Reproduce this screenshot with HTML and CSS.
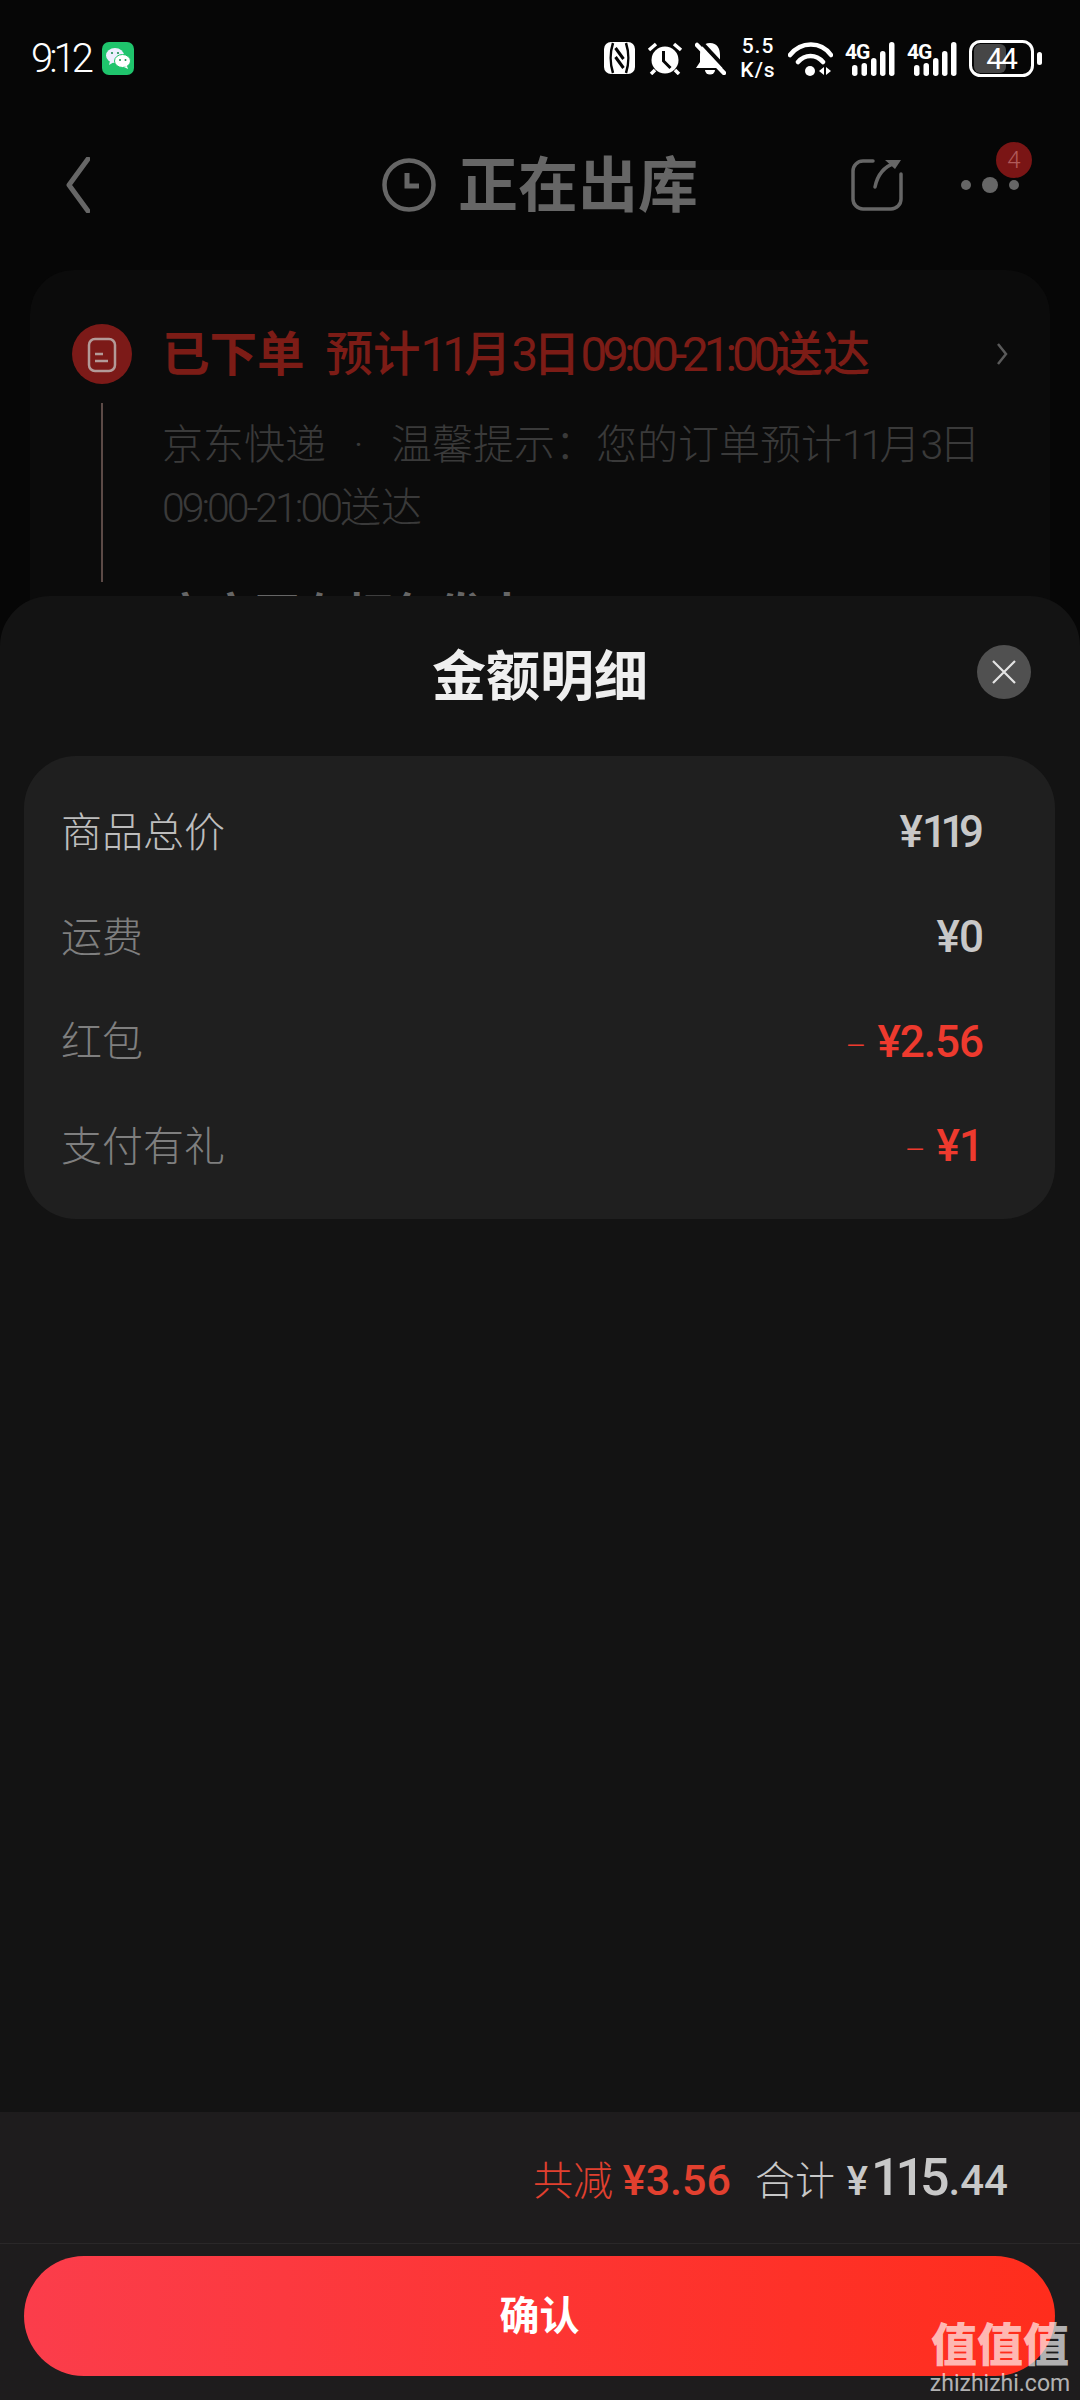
FILE: index.html
```html
<!DOCTYPE html>
<html lang="zh-CN">
<head>
  <meta charset="UTF-8" />
  <meta name="viewport" content="width=device-width, initial-scale=1" />
  <title>金额明细</title>
  <link rel="stylesheet" href="styles.css">
</head>
<body>
<div class="phone">

  <!-- Status bar -->
  <div class="status-bar">
    <div class="status-left">
      <span class="status-time">9:12</span>
      <svg class="wechat-icon" width="32" height="33" viewBox="0 0 32 33">
        <rect width="32" height="33" rx="7" fill="#1fc46c"/>
        <ellipse cx="13" cy="13.5" rx="9" ry="7.5" fill="#eef"/>
        <path d="M8 19l-1 4 5-3z" fill="#eef"/>
        <ellipse cx="20.5" cy="19" rx="8" ry="6.5" fill="#fff" stroke="#1fc46c" stroke-width="1"/>
        <path d="M25 24l1 3-4-2z" fill="#fff"/>
        <circle cx="10" cy="11" r="1.1" fill="#1a8f52"/>
        <circle cx="16" cy="11" r="1.1" fill="#1a8f52"/>
        <circle cx="18" cy="18" r="1" fill="#1a8f52"/>
        <circle cx="23.5" cy="18" r="1" fill="#1a8f52"/>
      </svg>
    </div>
    <div class="status-right">
      <svg width="31" height="32" viewBox="0 0 31 32">
        <rect width="31" height="32" rx="7" fill="#fff"/>
        <path d="M9 1C6 10 6 22 9 31M22 1c3 9 3 21 0 30" stroke="#060606" stroke-width="2.5" fill="none"/>
        <path d="M11.5 6l8 11M11.5 15l8 11" stroke="#060606" stroke-width="3" fill="none"/>
      </svg>
      <svg width="36" height="33" viewBox="0 0 36 33">
        <circle cx="18" cy="18" r="13.5" fill="#fff"/>
        <path d="M16.5 9v10l7 7" stroke="#060606" stroke-width="3" fill="none"/>
        <path d="M2 8l7-6M27 2l7 6M8 28l-4 4M28 28l4 4" stroke="#fff" stroke-width="3.5" fill="none"/>
      </svg>
      <svg width="31" height="33" viewBox="0 0 31 33">
        <path d="M15 1C8 1 5 6 5 13v7l-4 6h28l-4-6v-7C25 6 22 1 15 1z" fill="#fff"/>
        <path d="M10 28h10a5 4.5 0 0 1-10 0z" fill="#fff"/>
        <path d="M6 0l26 28" stroke="#060606" stroke-width="4" fill="none"/>
        <path d="M2 3l27 28" stroke="#fff" stroke-width="4.5" stroke-linecap="round" fill="none"/>
      </svg>
      <div class="net-speed"><span>5.5</span><span>K/s</span></div>
      <svg width="45" height="35" viewBox="0 0 45 35">
        <path d="M2 14C13 0 33 0 43 14M10 21c7-8 18-8 25 0" stroke="#fff" stroke-width="4.5" stroke-linecap="round" fill="none"/>
        <circle cx="22" cy="30" r="5" fill="#fff"/>
        <path d="M36 26v8l-5-4zM38 26v8l5-4z" fill="#fff"/>
      </svg>
      <svg width="50" height="35" viewBox="0 0 50 35">
        <text x="0" y="18" class="signal-label">4G</text>
        <rect x="7" y="24" width="5.5" height="11" rx="2.7" fill="#fff"/>
        <rect x="16.5" y="22" width="5.5" height="13" rx="2.7" fill="#fff"/>
        <rect x="26" y="17" width="5.5" height="18" rx="2.7" fill="#fff"/>
        <rect x="35" y="10" width="5.5" height="25" rx="2.7" fill="#fff"/>
        <rect x="44" y="1" width="5.5" height="34" rx="2.7" fill="#fff"/>
      </svg>
      <svg width="50" height="35" viewBox="0 0 50 35">
        <text x="0" y="18" class="signal-label">4G</text>
        <rect x="7" y="24" width="5.5" height="11" rx="2.7" fill="#fff"/>
        <rect x="16.5" y="22" width="5.5" height="13" rx="2.7" fill="#fff"/>
        <rect x="26" y="17" width="5.5" height="18" rx="2.7" fill="#fff"/>
        <rect x="35" y="10" width="5.5" height="25" rx="2.7" fill="#fff"/>
        <rect x="44" y="1" width="5.5" height="34" rx="2.7" fill="#fff"/>
      </svg>
      <svg width="73" height="37" viewBox="0 0 73 37">
        <rect x="5" y="4" width="32" height="29" rx="6" fill="#464646"/>
        <rect x="1.5" y="1.5" width="62" height="34" rx="10" fill="none" stroke="#fff" stroke-width="3"/>
        <rect x="68" y="12" width="5" height="13" rx="2.5" fill="#fff"/>
        <text x="32" y="29" class="battery-label">44</text>
      </svg>
    </div>
  </div>

  <!-- Page header, dimmed behind the sheet -->
  <div class="nav-bar">
    <svg class="back-icon" width="24" height="56" viewBox="0 0 24 56">
      <path d="M22 2L3 28l19 26" stroke="#666" stroke-width="5" stroke-linecap="round" stroke-linejoin="round" fill="none"/>
    </svg>
    <div class="nav-title">
      <svg width="54" height="54" viewBox="0 0 54 54">
        <circle cx="27" cy="27" r="24.5" stroke="#666" stroke-width="4.5" fill="none"/>
        <path d="M25 15v13h12" stroke="#666" stroke-width="5" fill="none"/>
      </svg>
      <span class="nav-title-text">正在出库</span>
    </div>
    <svg class="share-icon" width="54" height="54" viewBox="0 0 54 54">
      <path d="M23 3H13A10 10 0 0 0 3 13v28a10 10 0 0 0 10 10h28a10 10 0 0 0 10-10V16" stroke="#666" stroke-width="3.5" stroke-linecap="round" fill="none"/>
      <path d="M25 29C27 19 33 9 45 5" stroke="#666" stroke-width="3.5" stroke-linecap="round" fill="none"/>
      <path d="M35 2h16l-6 9z" fill="#666"/>
    </svg>
    <div class="more-btn">
      <i class="dot"></i><i class="dot dot-big"></i><i class="dot"></i>
      <span class="more-badge">4</span>
    </div>
  </div>

  <!-- Order card, dimmed behind the sheet -->
  <div class="order-card">
    <div class="track-col">
      <svg width="60" height="60" viewBox="0 0 60 60">
        <circle cx="30" cy="30" r="30" fill="#7c1a18"/>
        <rect x="17" y="15" width="26" height="32" rx="6" fill="none" stroke="#b39a98" stroke-width="2.5"/>
        <path d="M23 30h8M23 37h13" stroke="#b39a98" stroke-width="2.5" fill="none"/>
      </svg>
      <div class="track-line"></div>
    </div>
    <div class="track-body">
      <div class="track-title">
        <span>已下单</span>
        <span class="track-eta">预计<b class="tight">11</b>月<b class="tight">3</b>日<b class="tight">09:00-21:00</b>送达</span>
        <svg class="track-arrow" width="12" height="24" viewBox="0 0 12 24">
          <path d="M2 2l8 10-8 10" stroke="#5a5a5a" stroke-width="2.5" fill="none"/>
        </svg>
      </div>
      <div class="track-desc">京东快递<span class="desc-dot">·</span>温馨提示：您的订单预计<span class="tight">11</span>月<span class="tight">3</span>日<br><span class="desc-time">09:00-21:00</span>送达</div>
      <div class="track-next">商家正在打包发出</div>
    </div>
  </div>

  <!-- Amount details sheet -->
  <div class="sheet">
    <div class="sheet-head">
      <div class="sheet-title">金额明细</div>
      <div class="sheet-close">
        <svg width="24" height="24" viewBox="0 0 24 24">
          <path d="M1 1l22 22M23 1L1 23" stroke="#e4e4e4" stroke-width="2.2" fill="none"/>
        </svg>
      </div>
    </div>

    <div class="detail-panel">
      <div class="detail-row detail-row-main"><span class="detail-label">商品总价</span><span class="amount">¥<span class="amount-ones">11</span>9</span></div>
      <div class="detail-row"><span class="detail-label">运费</span><span class="amount">¥0</span></div>
      <div class="detail-row"><span class="detail-label">红包</span><span class="amount amount-off"><em>–</em>¥2.56</span></div>
      <div class="detail-row"><span class="detail-label">支付有礼</span><span class="amount amount-off"><em>–</em>¥1</span></div>
    </div>

    <div class="sheet-foot">
      <div class="total-row">
        <span class="total-off">共减 <b>¥3.56</b></span>
        <span class="total-sum"><span class="sum-label">合计</span> <span class="sum-unit">¥</span><b>115</b><span class="sum-cents">.44</span></span>
      </div>
      <button type="button" class="confirm-btn">确认</button>
    </div>
  </div>

  <!-- Site watermark -->
  <div class="watermark">
    <span class="watermark-top">值值值</span>
    <span class="watermark-url">zhizhizhi.com</span>
  </div>
</div>
</body>
</html>
```

FILE: styles.css
```css
body, html {
  margin: 0;
  padding: 0;
  background: #060606;
  font-family: Roboto, 'Noto Sans CJK SC', sans-serif;
}
.phone {
  position: relative;
  width: 1080px;
  height: 2400px;
  overflow: hidden;
  background: #060606;
}

/* status bar */
.status-bar {
  display: flex;
  justify-content: space-between;
  align-items: center;
  height: 116px;
  padding: 0 38px 0 31px;
  box-sizing: border-box;
}
.status-left, .status-right {
  display: flex;
  align-items: center;
}
.status-left {
  gap: 12px;
}
.status-right {
  gap: 12px;
}
.status-time {
  color: #fff;
  font-size: 40px;
  font-weight: 300;
  letter-spacing: -4px;
}
.net-speed {
  display: flex;
  flex-direction: column;
  align-items: center;
  margin-left: 2px;
  color: #fff;
  font-size: 21px;
  font-weight: 500;
  line-height: 24px;
  letter-spacing: 1px;
  width: 36px;
}
.signal-label {
  fill: #fff;
  font-family: Roboto, sans-serif;
  font-size: 21px;
  font-weight: 700;
  letter-spacing: -1px;
}
.battery-label {
  fill: #fff;
  font-family: Roboto, sans-serif;
  font-size: 30px;
  text-anchor: middle;
  letter-spacing: -2px;
}

/* nav */
.nav-bar {
  position: relative;
  display: flex;
  align-items: center;
  height: 138px;
  padding: 0 38px 0 66px;
  box-sizing: border-box;
}
.nav-title {
  display: flex;
  align-items: center;
  gap: 22px;
  margin-left: 292px;
  color: #666;
  font-size: 60px;
  font-weight: 700;
}
.nav-title-text {
  padding-bottom: 9px;
}
.share-icon {
  margin-left: 152px;
}
.more-btn {
  position: relative;
  display: flex;
  align-items: center;
  gap: 11px;
  margin-left: 57px;
}
.dot {
  width: 10px;
  height: 10px;
  border-radius: 50%;
  background: #666;
}
.dot-big {
  width: 16px;
  height: 16px;
}
.more-badge {
  position: absolute;
  left: 35px;
  top: -35px;
  width: 36px;
  height: 36px;
  border-radius: 50%;
  background: #7a1515;
  color: #b05a5a;
  font-size: 24px;
  font-weight: 300;
  line-height: 36px;
  text-align: center;
}

/* order card */
.order-card {
  display: flex;
  gap: 30px;
  margin: 16px 30px 0;
  padding: 54px 42px 0;
  height: 500px;
  box-sizing: border-box;
  background: #0b0b0b;
  border-radius: 44px;
}
.track-col {
  display: flex;
  flex-direction: column;
  align-items: center;
  flex: none;
  width: 60px;
}
.track-line {
  width: 2px;
  height: 179px;
  margin-top: 19px;
  background: #5c4a46;
}
.track-body {
  flex: 1;
}
.track-title {
  display: flex;
  align-items: center;
  gap: 21px;
  height: 60px;
  padding-bottom: 8px;
  box-sizing: border-box;
  color: #7c1c16;
  font-size: 47.5px;
  font-weight: 700;
  white-space: nowrap;
}
.track-eta {
  font-weight: 500;
}
.track-eta .tight {
  font-weight: 400;
  letter-spacing: -5px;
}
.track-arrow {
  margin-left: auto;
  margin-top: 8px;
}
.tight {
  letter-spacing: -4px;
}
.desc-time {
  letter-spacing: -3px;
}
.track-desc {
  margin-top: 30px;
  color: #3a3a3a;
  font-size: 41px;
  font-weight: 300;
  line-height: 63px;
  white-space: nowrap;
}
.desc-dot {
  display: inline-block;
  width: 65px;
  text-align: center;
}
.track-next {
  margin-top: 45px;
  color: #666;
  font-size: 46px;
  font-weight: 700;
  line-height: 60px;
}

/* sheet */
.sheet {
  position: absolute;
  left: 0;
  right: 0;
  top: 596px;
  bottom: 0;
  display: flex;
  flex-direction: column;
  background: #131313;
  border-radius: 50px 50px 0 0;
}
.sheet-head {
  position: relative;
  display: flex;
  justify-content: center;
  align-items: center;
  height: 160px;
  flex: none;
}
.sheet-title {
  padding-bottom: 8px;
  color: #efefef;
  font-size: 54px;
  font-weight: 700;
}
.sheet-close {
  position: absolute;
  right: 49px;
  top: 49px;
  display: flex;
  justify-content: center;
  align-items: center;
  width: 54px;
  height: 54px;
  border-radius: 50%;
  background: #505050;
}
.detail-panel {
  margin: 0 25px 0 24px;
  padding: 24px 72px 0 37px;
  height: 463px;
  box-sizing: border-box;
  background: #1f1f1f;
  border-radius: 52px;
}
.detail-row {
  display: flex;
  justify-content: space-between;
  align-items: center;
  height: 104.7px;
  color: #7f7f7f;
  font-size: 41px;
  font-weight: 300;
}
.detail-label {
  padding-bottom: 7px;
}
.detail-row-main {
  color: #bdbdbd;
}
.amount {
  color: #c8c8c8;
  font-size: 44px;
  font-weight: 500;
  letter-spacing: -1px;
}
.amount-ones {
  letter-spacing: -6.5px;
}
.amount-off {
  color: #ee3a2e;
}
.amount-off em {
  font-style: normal;
  font-size: 32px;
  font-weight: 300;
  margin-right: 12px;
}

/* footer */
.sheet-foot {
  margin-top: auto;
  background: #1e1c1d;
}
.total-row {
  display: flex;
  justify-content: flex-end;
  align-items: baseline;
  gap: 24px;
  height: 132px;
  padding: 35px 72px 0 0;
  box-sizing: border-box;
  border-bottom: 1px solid #2a2829;
  font-size: 40px;
}
.total-off {
  color: #e2402f;
  font-weight: 300;
}
.total-off b {
  font-size: 43px;
  font-weight: 500;
}
.total-sum {
  color: #c8c8c8;
  font-weight: 300;
}
.sum-label {
  margin-right: 2px;
}
.sum-unit {
  font-weight: 500;
  margin-right: 3px;
}
.total-sum b {
  font-size: 52px;
  font-weight: 500;
  letter-spacing: -5px;
}
.sum-cents {
  margin-left: 4px;
  font-size: 42px;
  font-weight: 500;
}
.confirm-btn {
  display: block;
  width: 1031px;
  height: 120px;
  margin: 12px 25px 24px 24px;
  padding: 0 0 7px;
  border: none;
  border-radius: 60px;
  background: linear-gradient(90deg, #fb3d4b, #ff2d1c);
  color: #fff;
  font-family: inherit;
  font-size: 40px;
  font-weight: 700;
}

/* watermark */
.watermark {
  position: absolute;
  right: 11px;
  bottom: 3px;
  display: flex;
  flex-direction: column;
  align-items: center;
  width: 138px;
  color: rgba(255, 255, 255, 0.68);
}
.watermark-top {
  font-size: 46px;
  font-weight: 900;
  line-height: 52px;
}
.watermark-url {
  font-size: 23px;
  line-height: 26px;
}
```
